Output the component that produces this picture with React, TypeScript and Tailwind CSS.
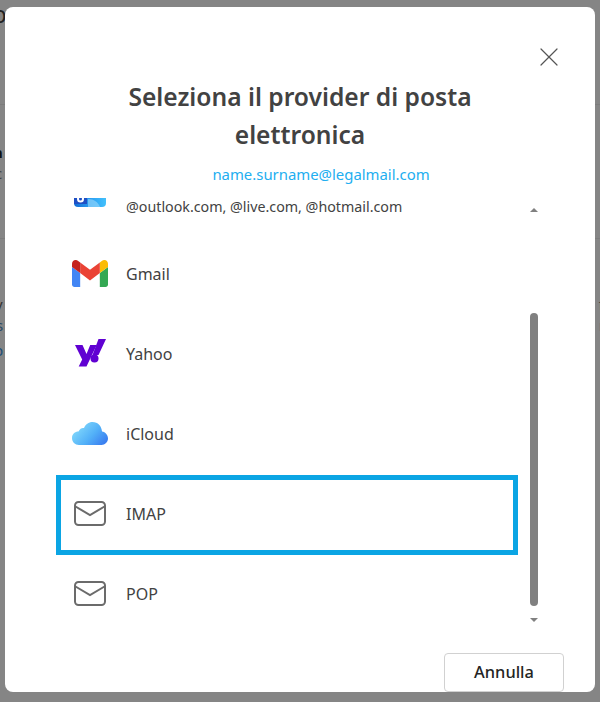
import { X } from 'lucide-react';

const font = { fontFamily: '"Noto Sans", "Open Sans", sans-serif' };

function GmailIcon() {
  return (
    <svg viewBox="52 42 88 66" className="w-9 h-[27px]">
      <path fill="#4285f4" d="M58 108h14V74L52 59v43c0 3.32 2.69 6 6 6" />
      <path fill="#34a853" d="M120 108h14c3.32 0 6-2.69 6-6V59l-20 15" />
      <path fill="#fbbc04" d="M120 48v26l20-15v-8c0-7.42-8.47-11.65-14.4-7.2" />
      <path fill="#ea4335" d="M72 74V48l24 18 24-18v26L96 92" />
      <path fill="#c5221f" d="M52 51v8l20 15V48l-5.6-4.2c-5.94-4.45-14.4-.22-14.4 7.2" />
    </svg>
  );
}

function YahooIcon() {
  return (
    <svg viewBox="72 338 36 31" className="w-9 h-[31px]">
      <path fill="#6001d2" d="M75 345h7.500l4 9 3.700-9h6.500l-10.200 21.500h-7.800l3.500-7z" />
      <path fill="#6001d2" d="M98.500 339h7.500l-7.500 16h-6z" />
      <circle fill="#6001d2" cx="94.500" cy="358.500" r="4" />
    </svg>
  );
}

function ICloudIcon() {
  return (
    <svg viewBox="0 0 36 23" className="w-9 h-[23px]">
      <defs>
        <linearGradient id="cloud" x1="0.1" y1="0.3" x2="0.95" y2="0.8">
          <stop offset="0" stopColor="#7fd6fb" />
          <stop offset="0.55" stopColor="#52b0f8" />
          <stop offset="1" stopColor="#3b80f0" />
        </linearGradient>
      </defs>
      <path
        fill="url(#cloud)"
        d="M7 23C3 23 0 20 0 16c0-4 3-6.500 6.500-6.500C8 6.500 10 5.500 12 6c1.500-3.500 4.500-6 8.500-6C26 0 29.500 4 30 9.500c3.500.5 6 3.500 6 7 0 3.500-3 6.500-6.500 6.500z"
      />
    </svg>
  );
}

function OutlookIcon() {
  return (
    <svg viewBox="0 0 36 28" className="w-9 h-7">
      <defs>
        <linearGradient id="ol" x1="0" y1="0" x2="1" y2="0">
          <stop offset="0" stopColor="#0f6cd6" />
          <stop offset="0.6" stopColor="#2fa5f5" />
          <stop offset="1" stopColor="#42c0fb" />
        </linearGradient>
      </defs>
      <rect x="2" y="2" width="32" height="26" rx="4" fill="url(#ol)" />
      <path fill="#8fd3fa" d="M16 20c6 0 10 3 12 8H16z" opacity="0.7" />
      <path fill="#1e4fc4" d="M2 4h13v21H2z" />
      <circle cx="8.500" cy="20" r="2.500" fill="none" stroke="#fff" strokeWidth="2" />
    </svg>
  );
}

function MailIcon() {
  return (
    <svg viewBox="0 0 32 25" className="w-8 h-[25px]" fill="none" stroke="#6b6b6b" strokeWidth="2">
      <rect x="1" y="1" width="30" height="23" rx="3.500" />
      <path d="M1.500 5.500 16 14l14.500-8.500" />
    </svg>
  );
}

const rows = [
  { name: 'Gmail', icon: <GmailIcon /> },
  { name: 'Yahoo', icon: <YahooIcon /> },
  { name: 'iCloud', icon: <ICloudIcon /> },
  { name: 'IMAP', icon: <MailIcon />, active: true },
  { name: 'POP', icon: <MailIcon /> },
];

export default function App() {
  return (
    <div className="relative w-[600px] h-[702px] overflow-hidden bg-[#858585]" style={font}>
      {/* dimmed page behind the dialog */}
      <div className="flex flex-col text-[#333] text-[15px] leading-5">
        <div className="flex justify-between h-[50px] pt-1 text-[24px] text-[#222]"><span className="-ml-2">p</span></div>
        <div className="h-[54px] text-[14px] text-[#555]"><span className="-ml-2">s</span></div>
        <div className="h-px bg-[#7c7c7c]" />
        <div className="h-[37px]" />
        <div className="h-[21px] font-bold text-[#111]"><span className="-ml-[7px]">n</span></div>
        <div className="h-[35px] text-[#444]"><span className="-ml-[5px]">c</span></div>
        <div className="h-[40px]" />
        <div className="h-px bg-[#7c7c7c]" />
        <div className="h-[27px]" />
        <div className="h-[24px]" />
        <div className="flex justify-between h-[25px] pt-1"><span className="-ml-[5px]">v</span><span className="-mr-1">f</span></div>
        <div className="flex justify-between h-[25px] text-[#2a4a66]"><span className="-ml-1">s</span><span className="-mr-[5px]">r</span></div>
        <div className="h-[25px] text-[#1d4f78]"><span className="-ml-[6px]">p</span></div>
      </div>

      {/* dialog */}
      <div className="absolute left-[5px] top-[7px] w-[590px] h-[685px] bg-white rounded-lg flex flex-col">
        <button className="absolute left-[528px] top-[34px] text-[#555]">
          <X size={32} strokeWidth={0.9} />
        </button>
        <h1 className="mt-[71px] text-center text-[24.6px] leading-[38px] font-semibold text-[#424242]">
          Seleziona il provider di posta
          <br />
          elettronica
        </h1>
        <p className="ml-[42px] text-center text-[14.9px] leading-6 text-[#22aef0] mt-2">name.surname@legalmail.com</p>

        <div className="mt-3 ml-[51px] h-[437px] flex gap-3">
          <div className="w-[462px] h-full overflow-hidden">
            <div className="-mt-[43px]">
              <div className="h-20 pb-[2px] flex items-center gap-[18px] pl-4">
                <div className="w-9 pb-[2px] flex justify-center"><OutlookIcon /></div>
                <div className="flex flex-col pt-[6px] text-[#424242]">
                  <span className="text-[16px] leading-5">Outlook</span>
                  <span className="text-[14.25px] leading-5">@outlook.com, @live.com, @hotmail.com</span>
                </div>
              </div>
              {rows.map((row) => (
                <div
                  key={row.name}
                  className={`h-20 pb-[2px] flex items-center gap-[18px] ${row.active ? 'border-[5px] border-[#0ba5e4] pl-[11px]' : 'pl-4'}`}
                >
                  <div className="w-9 pb-[2px] flex justify-center">{row.icon}</div>
                  <span className="text-[16px] text-[#424242]">{row.name}</span>
                </div>
              ))}
            </div>
          </div>
          <div className="w-2 flex flex-col items-center pt-[10px]">
            <div className="w-0 h-0 border-x-[4px] border-x-transparent border-b-[4px] border-b-[#808080]" />
            <div className="mt-[101px] w-2 h-[293px] rounded-full bg-[#808080]" />
            <div className="mt-3 w-0 h-0 border-x-[4px] border-x-transparent border-t-[4px] border-t-[#808080]" />
          </div>
        </div>

        <button className="mt-[18px] mr-[31px] self-end w-[120px] h-[39px] bg-white border border-[#d1d1d1] rounded text-[16.4px] font-medium text-[#242424]">
          Annulla
        </button>
      </div>
    </div>
  );
}
